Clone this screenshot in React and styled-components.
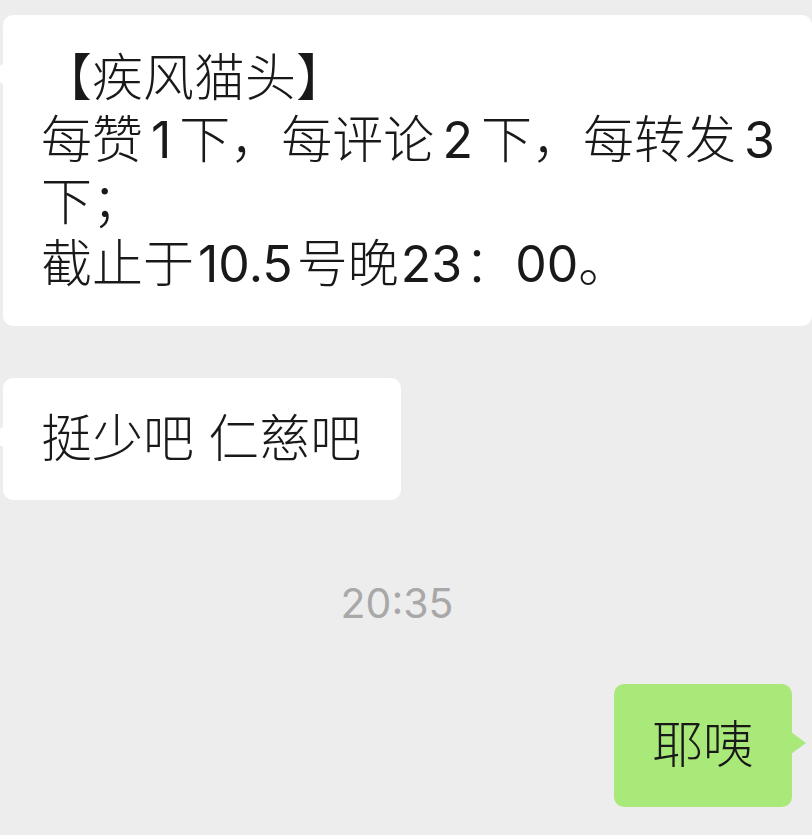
import styled, { createGlobalStyle } from "styled-components";

const GlobalStyle = createGlobalStyle`
  html, body {
    margin: 0;
    padding: 0;
    background: #ededed;
  }
  body {
    font-family: Inter, "Noto Sans CJK SC", sans-serif;
    -webkit-font-smoothing: antialiased;
  }
`;

const Chat = styled.div`
  width: 812px;
  height: 835px;
  overflow: hidden;
  background: #ededed;
  display: flex;
  flex-direction: column;
  padding-top: 15px;
  box-sizing: border-box;
`;

const Row = styled.div`
  display: flex;
  justify-content: ${(props) => (props.mine ? "flex-end" : "flex-start")};
  padding: ${(props) => (props.mine ? "0 20px 0 0" : "0 0 0 3px")};
  margin-top: ${(props) => props.mt || "0"};
`;

const Bubble = styled.div`
  position: relative;
  box-sizing: border-box;
  width: ${(props) => props.width || "auto"};
  padding: ${(props) => props.pad || "30px 40px 30px 38px"};
  border-radius: 10px;
  background: ${(props) => (props.mine ? "#a9e97a" : "#ffffff")};
  color: #191919;
  font-size: 51px;
  font-weight: 300;
  line-height: 62px;

  &::before {
    content: "";
    position: absolute;
    top: 48px;
    ${(props) => (props.mine ? "right: -14px;" : "left: -14px;")}
    width: 0;
    height: 0;
    border-top: 11px solid transparent;
    border-bottom: 11px solid transparent;
    ${(props) =>
      props.mine
        ? "border-left: 15px solid #a9e97a;"
        : "border-right: 15px solid #ffffff;"}
  }
`;

const Line = styled.div`
  white-space: nowrap;
`;

const Num = styled.span`
  margin: 0 ${(props) => props.gap || "8px"};
  font-size: 50px;
  font-weight: 400;
`;

const Time = styled.div`
  margin-top: 75px;
  padding-right: 18px;
  text-align: center;
  font-size: 41px;
  line-height: 56px;
  color: #a8a8a8;
`;

export default function App() {
  return (
    <>
      <GlobalStyle />
      <Chat>
        <Row>
          <Bubble width="809px" pad="32px 38px 31px">
            <Line>【疾风猫头】</Line>
            <Line>
              每赞<Num>1</Num>下，每评论<Num>2</Num>下，每转发<Num>3</Num>
            </Line>
            <Line>下；</Line>
            <Line>
              截止于<Num gap="4px">10.5</Num>号晚<Num gap="2px">23</Num>：<Num gap="0">00</Num>。
            </Line>
          </Bubble>
        </Row>
        <Row mt="52px">
          <Bubble>
            <Line>挺少吧 仁慈吧</Line>
          </Bubble>
        </Row>
        <Time>20:35</Time>
        <Row mine mt="53px">
          <Bubble mine pad="30px 38px 31px">
            <Line>耶咦</Line>
          </Bubble>
        </Row>
      </Chat>
    </>
  );
}
